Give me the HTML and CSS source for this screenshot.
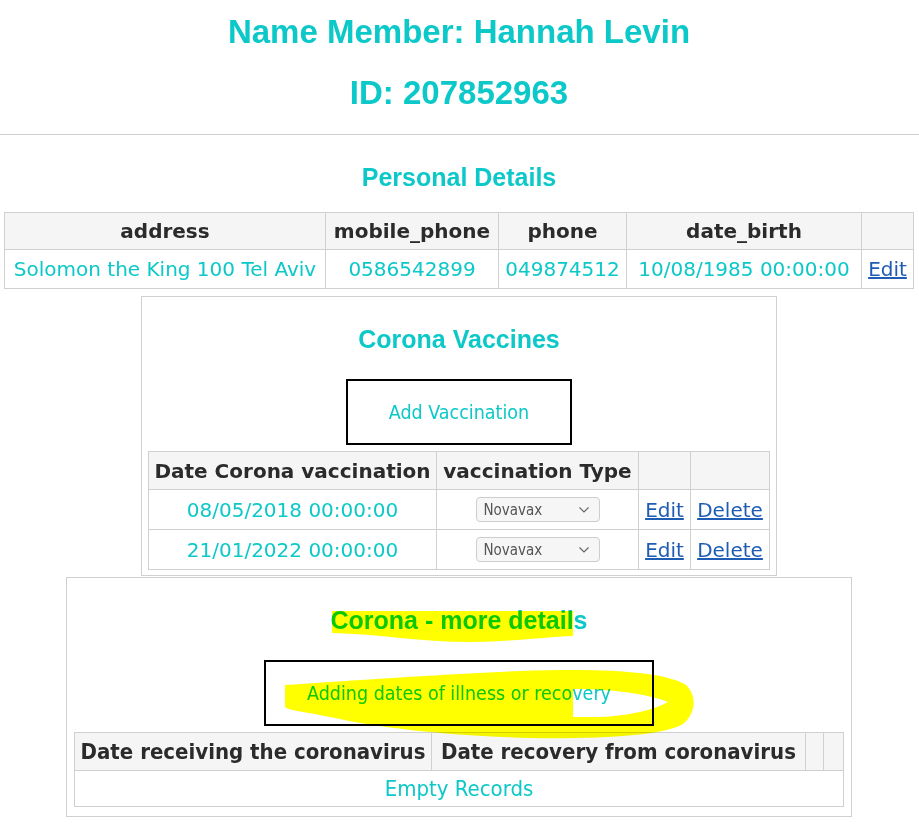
FILE: index.html
```html
<!DOCTYPE html>
<html lang="en">
<head>
<meta charset="utf-8">
<title>Member details</title>
<link rel="stylesheet" href="styles.css">
</head>
<body>
  <header class="member">
    <h1 class="title title-name">Name Member: Hannah Levin</h1>
    <h1 class="title title-id">ID: 207852963</h1>
  </header>
  <hr class="divider">

  <h2 class="section-title personal-title">Personal Details</h2>
  <table class="grid personal">
    <colgroup>
      <col class="c-address"><col class="c-mobile"><col class="c-phone"><col class="c-birth"><col class="c-edit">
    </colgroup>
    <thead>
      <tr><th>address</th><th>mobile_phone</th><th>phone</th><th>date_birth</th><th></th></tr>
    </thead>
    <tbody>
      <tr><td>Solomon the King 100 Tel Aviv</td><td>0586542899</td><td>049874512</td><td>10/08/1985 00:00:00</td><td><a class="link" href="#">Edit</a></td></tr>
    </tbody>
  </table>

  <section class="panel vaccines">
    <h2 class="section-title">Corona Vaccines</h2>
    <a class="action action-vacc" href="#">Add Vaccination</a>
    <table class="grid vacc">
      <colgroup>
        <col class="v-date"><col class="v-type"><col class="v-edit"><col class="v-del">
      </colgroup>
      <thead>
        <tr><th>Date Corona vaccination</th><th>vaccination Type</th><th></th><th></th></tr>
      </thead>
      <tbody>
        <tr>
          <td>08/05/2018 00:00:00</td>
          <td><div class="select"><span>Novavax</span><svg class="chev" width="12" height="8" viewBox="0 0 12 8"><path d="M1.5 1.5 L6 6 L10.5 1.5" fill="none" stroke="#666" stroke-width="1.2"/></svg></div></td>
          <td><a class="link" href="#">Edit</a></td>
          <td><a class="link" href="#">Delete</a></td>
        </tr>
        <tr>
          <td>21/01/2022 00:00:00</td>
          <td><div class="select"><span>Novavax</span><svg class="chev" width="12" height="8" viewBox="0 0 12 8"><path d="M1.5 1.5 L6 6 L10.5 1.5" fill="none" stroke="#666" stroke-width="1.2"/></svg></div></td>
          <td><a class="link" href="#">Edit</a></td>
          <td><a class="link" href="#">Delete</a></td>
        </tr>
      </tbody>
    </table>
  </section>

  <section class="panel illness">
    <h2 class="section-title">Corona - more details</h2>
    <a class="action action-ill" href="#">Adding dates of illness or recovery</a>
    <table class="grid ill">
      <colgroup>
        <col class="i-recv"><col class="i-recov"><col class="i-a"><col class="i-b">
      </colgroup>
      <thead>
        <tr><th>Date receiving the coronavirus</th><th>Date recovery from coronavirus</th><th></th><th></th></tr>
      </thead>
      <tbody>
        <tr><td class="empty" colspan="4">Empty Records</td></tr>
      </tbody>
    </table>
  </section>

  <svg class="marker" width="919" height="832" viewBox="0 0 919 832" aria-hidden="true">
    <path fill="#ffff00" d="M332,611 L573,611 L573,636 C545,637 520,641 470,642 C420,642 380,634 332,633 Z"/>
    <path fill="#ffff00" fill-rule="evenodd" d="M285,685 C360,680 430,675 520,671 C600,668 665,671 686,685 C698,697 695,714 683,724 C662,736 600,739 530,738 C450,736 380,728 330,717 C300,711 288,710 285,707 Z M573,689 C610,689 645,693 668,702 C652,711 625,716 600,717 L573,717 Z"/>
  </svg>
</body>
</html>
```

FILE: styles.css
```css
html {
  background: #ffffff;
}

body {
  margin: 0;
  padding-right: 1px;
  position: relative;
  min-height: 832px;
  font-family: "DejaVu Sans", Verdana, sans-serif;
  color: #0cc8c8;
}

.title {
  margin: 0;
  font: bold 33px/40px "Liberation Sans", Arial, sans-serif;
  text-align: center;
  color: #0cc8c8;
}

.title-name {
  padding-top: 12px;
}

.title-id {
  margin-top: 21px;
}

.divider {
  margin: 21px -1px 0 0;
  border: 0;
  border-top: 1px solid #cfcfcf;
  height: 0;
}

.section-title {
  margin: 0;
  font: bold 25px/30px "Liberation Sans", Arial, sans-serif;
  text-align: center;
  color: #0cc8c8;
}

.personal-title {
  margin-top: 27px;
  margin-bottom: 20px;
}

.grid {
  border-collapse: collapse;
  table-layout: fixed;
  margin: 0 auto;
}

.grid th,
.grid td {
  border: 1px solid #d0d0d0;
  padding: 0 4px;
  text-align: center;
  white-space: nowrap;
  font-size: 20px;
}

.grid th {
  background: #f5f5f5;
  color: #2b2b2b;
  font-weight: bold;
}

.grid td {
  color: #0cc8c8;
}

.personal {
  width: 909px;
}

.personal th { height: 36px; }
.personal td { height: 38px; }

.c-address { width: 321px; }
.c-mobile { width: 173px; }
.c-phone { width: 128px; }
.c-birth { width: 235px; }
.c-edit { width: 52px; }

.link {
  color: #1f5cb4;
  text-decoration: underline;
}

.panel {
  box-sizing: border-box;
  border: 1px solid #d0d0d0;
  margin: 0 auto;
  padding-top: 27px;
}

.vaccines {
  width: 636px;
  margin-top: 7px;
  padding-left: 6px;
  padding-right: 6px;
  padding-bottom: 5px;
}

.illness {
  width: 786px;
  margin-top: 1px;
  padding-left: 7px;
  padding-right: 7px;
  padding-bottom: 9px;
}

.action {
  box-sizing: border-box;
  display: flex;
  align-items: center;
  justify-content: center;
  height: 66px;
  margin: 25px auto 6px;
  padding-top: 1px;
  border: 2px solid #000;
  font: 19.5px "DejaVu Sans Condensed", Tahoma, sans-serif;
  color: #0cc8c8;
  text-decoration: none;
}

.action-vacc { width: 226px; }
.action-ill { width: 390px; }

.vacc { width: 621px; }
.vacc th { height: 37px; }
.vacc td { height: 39px; }

.v-date { width: 288px; }
.v-type { width: 202px; }
.v-edit { width: 52px; }
.v-del { width: 79px; }

.select {
  box-sizing: border-box;
  display: flex;
  align-items: center;
  justify-content: space-between;
  width: 124px;
  height: 25px;
  margin: 0 auto;
  padding: 0 9px 0 7px;
  border: 1px solid #cdcdcd;
  border-radius: 4px;
  background: #f6f6f6;
  font: 15px "DejaVu Sans Condensed", Tahoma, sans-serif;
  color: #555;
}

.ill { width: 769px; }
.ill th {
  height: 37px;
  font-family: "DejaVu Sans Condensed", Tahoma, sans-serif;
  font-size: 22px;
}
.ill td {
  height: 35px;
  font-family: "DejaVu Sans Condensed", Tahoma, sans-serif;
  font-size: 22px;
}

.i-recv { width: 357px; }
.i-recov { width: 374px; }
.i-a { width: 18px; }
.i-b { width: 20px; }

.marker {
  position: absolute;
  top: 0;
  left: 0;
  pointer-events: none;
  mix-blend-mode: multiply;
}
```
